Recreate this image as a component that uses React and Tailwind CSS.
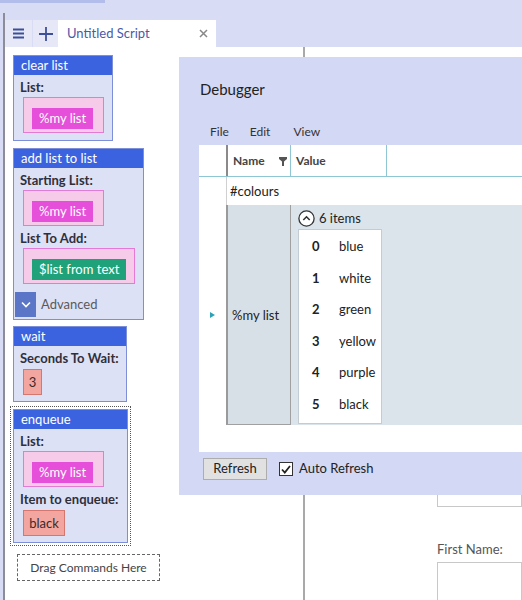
import React from 'react'

const font = { fontFamily: 'Lato, "Open Sans", sans-serif' }

function Block({ title, width, children }) {
  return (
    <div className={`border border-[#7d8fd9] bg-[#dde1f6] ${width}`}>
      <div className="h-[19px] bg-[#3c63df] px-[7px] text-[13px] leading-[19px] text-white">{title}</div>
      <div className="px-[6px] pb-[6px]">{children}</div>
    </div>
  )
}

function Label({ children }) {
  return <div className="mt-[5px] text-[13px] font-bold leading-[14px] text-[#2f2f3a]">{children}</div>
}

function Slot({ width, children }) {
  return (
    <div className={`ml-[3px] mt-[3px] h-[36px] border border-[#e27ad6] bg-[#f6cbe9] pl-[8px] pt-[7px] ${width}`}>
      {children}
    </div>
  )
}

function Chip({ children, green }) {
  return (
    <div
      className={`inline-block h-[21px] px-[7px] text-[13px] leading-[21px] text-white ${
        green ? 'bg-[#1fa27a]' : 'bg-[#e64fd9]'
      }`}
    >
      {children}
    </div>
  )
}

function Salmon({ children, width }) {
  return (
    <div className={`ml-[3px] mt-[4px] h-[26px] border border-[#d5776f] bg-[#f3a6a0] text-center text-[13px] leading-[24px] text-[#3a2a2a] ${width}`}>
      {children}
    </div>
  )
}

function Toolbox() {
  return (
    <div className="flex flex-col items-start pl-[8px] pt-[8px]">
      <div className="w-[100px] border border-[#7d8fd9] bg-[#dde1f6]">
        <div className="h-[19px] bg-[#3c63df] px-[7px] text-[13px] leading-[19px] text-white">clear list</div>
        <div className="px-[6px] pb-[7px]">
          <Label>List:</Label>
          <Slot width="w-[81px]">
            <Chip>%my list</Chip>
          </Slot>
        </div>
      </div>

      <div className="mt-[7px]">
        <div className="w-[131px] border border-[#7d8fd9] bg-[#dde1f6]">
          <div className="h-[19px] bg-[#3c63df] px-[7px] text-[13px] leading-[19px] text-white">add list to list</div>
          <div className="px-[6px]">
            <Label>Starting List:</Label>
            <Slot width="w-[81px]">
              <Chip>%my list</Chip>
            </Slot>
            <Label>List To Add:</Label>
            <Slot width="w-[112px]">
              <Chip green>$list from text</Chip>
            </Slot>
          </div>
          <div className="mt-[8px] flex items-center pb-[2px] pl-[1px]">
            <div className="flex h-[25px] w-[21px] items-center justify-center bg-[#5c76c7]">
              <svg width="10" height="7" viewBox="0 0 10 7">
                <path d="M1 1.5 L5 5.5 L9 1.5" fill="none" stroke="white" strokeWidth="1.6" />
              </svg>
            </div>
            <span className="ml-[5px] text-[13px] text-[#5a5a5a]">Advanced</span>
          </div>
        </div>
      </div>

      <div className="mt-[6px]">
        <Block title="wait" width="w-[114px]">
          <Label>Seconds To Wait:</Label>
          <Salmon width="w-[19px]">3</Salmon>
        </Block>
      </div>

      <div className="ml-[-3px] mt-[4px] border border-dotted border-[#555] p-[2px]">
        <Block title="enqueue" width="w-[115px]">
          <Label>List:</Label>
          <Slot width="w-[81px]">
            <Chip>%my list</Chip>
          </Slot>
          <Label>Item to enqueue:</Label>
          <Salmon width="w-[42px]">black</Salmon>
        </Block>
      </div>

      <div className="ml-[4px] mt-[8px] flex h-[27px] w-[143px] items-center justify-center border border-dashed border-[#666] text-[12px] text-[#444]">
        Drag Commands Here
      </div>
    </div>
  )
}

function Debugger() {
  const items = ['blue', 'white', 'green', 'yellow', 'purple', 'black']
  return (
    <div className="absolute left-[179px] top-[57px] flex h-[438px] w-[343px] flex-col bg-[#d3d8f4]">
      <div className="ml-[21px] mt-[22px] text-[15px] leading-[20px] text-[#222]">Debugger</div>
      <div className="ml-[31px] mt-[25px] flex text-[12px] leading-[16px] text-[#333]">
        <span>File</span>
        <span className="ml-[21px]">Edit</span>
        <span className="ml-[23px]">View</span>
      </div>
      <div className="ml-[20px] mt-[5px] h-[307px] shrink-0 bg-white">
        <div className="flex h-[32px] border-b border-[#8fc6d4]">
          <div className="w-[27px]" />
          <div className="flex w-[65px] items-center border-l-2 border-r border-l-[#8a8a8a] border-r-[#8fc6d4] pl-[5px] pt-[1px] text-[12px] font-bold text-[#444]">
            Name
            <svg className="ml-[14px]" width="8" height="9" viewBox="0 0 8 9">
              <path d="M0 0 H8 V2 L5 4.5 V9 H3 V4.5 L0 2 Z" fill="#555" />
            </svg>
          </div>
          <div className="flex w-[96px] items-center border-r border-[#8fc6d4] pl-[5px] pt-[1px] text-[12px] font-bold text-[#444]">
            Value
          </div>
        </div>
        <div className="flex h-[28px]">
          <div className="w-[27px]" />
          <div className="flex-1 border-l border-[#d0d0d0] pl-[3px] text-[13px] leading-[29px] text-[#222]">#colours</div>
        </div>
        <div className="flex h-[220px]">
          <div className="flex w-[27px] items-center justify-center">
            <svg width="5" height="6" viewBox="0 0 5 6">
              <path d="M0 0 L5 3 L0 6 Z" fill="#2aa3b8" />
            </svg>
          </div>
          <div className="flex w-[65px] items-center border-b border-l-2 border-r border-b-[#a0a0a0] border-l-[#9a9a9a] border-r-[#a0a0a0] bg-[#d7e0e7] pl-[4px] pt-[3px] text-[13px] text-[#222]">
            %my list
          </div>
          <div className="flex-1 bg-[#dbe4eb] pl-[7px] pt-[3px]">
            <div className="flex h-[21px] items-center">
              <svg width="17" height="17" viewBox="0 0 17 17">
                <circle cx="8.5" cy="8.5" r="7.6" fill="white" stroke="#333" strokeWidth="1.3" />
                <path d="M5.3 10 L8.5 6.8 L11.7 10" fill="none" stroke="#333" strokeWidth="1.6" />
              </svg>
              <span className="ml-[4px] text-[13px] text-[#222]">6 items</span>
            </div>
            <div className="w-[84px] border border-[#c4ccd3] bg-white pb-[2px] pt-[1px]">
              {items.map((it, i) => (
                <div key={it} className="flex h-[31.6px] items-center text-[13px] text-[#222]">
                  <span className="ml-[13px] w-[27px] font-bold">{i}</span>
                  <span>{it}</span>
                </div>
              ))}
            </div>
          </div>
        </div>
      </div>
      <div className="ml-[24px] mt-[6px] flex items-center">
        <div className="flex h-[22px] w-[64px] items-center justify-center border border-[#adadad] bg-[#e1e1e1] text-[13px] text-[#222]">
          Refresh
        </div>
        <div className="ml-[12px] flex h-[14px] w-[14px] items-center justify-center border border-[#333] bg-white">
          <svg width="10" height="9" viewBox="0 0 10 9">
            <path d="M1 4.5 L3.8 7.5 L9 1" fill="none" stroke="#222" strokeWidth="1.8" />
          </svg>
        </div>
        <span className="ml-[6px] text-[13px] text-[#222]">Auto Refresh</span>
      </div>
    </div>
  )
}

export default function App() {
  return (
    <div className="relative h-[600px] w-[522px] overflow-hidden bg-[#d8dcf4]" style={font}>
      <div className="h-[13px]">
        <div className="h-[3px] w-[105px] bg-[#b3bdeb]" />
      </div>
      <div className="ml-[3px] flex h-[587px] flex-col border-l-2 border-[#8d8d9a]">
        <div className="mt-[7px] flex h-[27px] shrink-0">
          <div className="flex w-[27px] items-center justify-center bg-[#e6e8f7]">
            <svg width="11" height="11" viewBox="0 0 11 11">
              <path d="M0 1.5 H11 M0 5.5 H11 M0 9.5 H11" stroke="#3d4f9a" strokeWidth="1.8" />
            </svg>
          </div>
          <div className="flex w-[26px] items-center justify-center border-l border-[#d8dcf4] bg-[#e6e8f7]">
            <svg width="14" height="14" viewBox="0 0 14 14">
              <path d="M7 0 V14 M0 7 H14" stroke="#3d4f9a" strokeWidth="1.8" />
            </svg>
          </div>
          <div className="flex w-[158px] items-center bg-white pl-[9px] pr-[8px]">
            <span className="flex-1 text-[13px] text-[#4a5aa8]">Untitled Script</span>
            <svg width="9" height="9" viewBox="0 0 9 9">
              <path d="M1 1 L8 8 M8 1 L1 8" stroke="#888" strokeWidth="1.5" />
            </svg>
          </div>
        </div>
        <div className="flex min-h-0 flex-1 overflow-hidden bg-white">
          <div className="w-[300px] shrink-0 border-r-2 border-[#a9a9a9]">
            <Toolbox />
          </div>
          <div className="flex-1 pl-[132px]">
            <div className="mt-[426px] h-[34px] border border-[#c8c8c8]" />
            <div className="mt-[33px] text-[13px] text-[#555]">First Name:</div>
            <div className="mt-[2px] h-[40px] border border-[#c8c8c8]" />
          </div>
        </div>
      </div>
      <Debugger />
    </div>
  )
}
